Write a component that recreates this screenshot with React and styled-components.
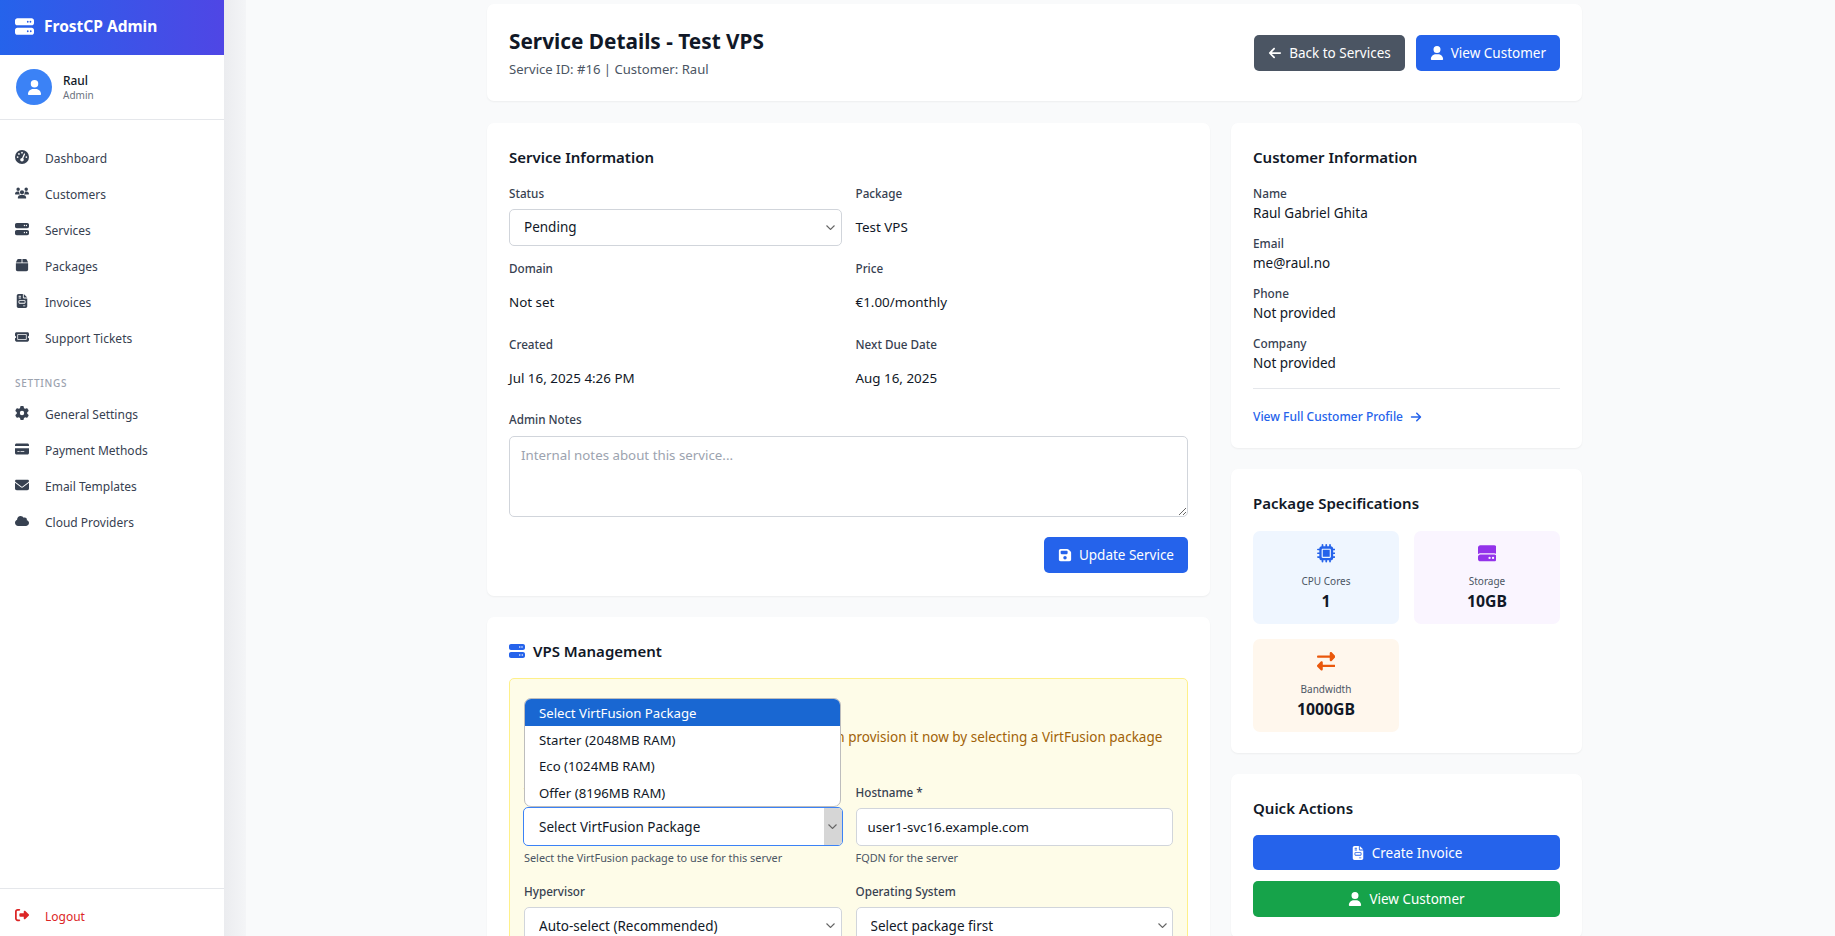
import React from "react";
import styled, { createGlobalStyle } from "styled-components";
import {
  FaArrowLeft,
  FaArrowRight,
  FaBox,
  FaCloud,
  FaCreditCard,
  FaEnvelope,
  FaFileInvoice,
  FaFloppyDisk,
  FaGaugeHigh,
  FaGear,
  FaHardDrive,
  FaMicrochip,
  FaRightFromBracket,
  FaRightLeft,
  FaServer,
  FaTicket,
  FaUser,
  FaUsers,
  FaTriangleExclamation,
} from "react-icons/fa6";

const chevron = `url("data:image/svg+xml,%3Csvg xmlns='http://www.w3.org/2000/svg' width='9' height='5' viewBox='0 0 9 5' fill='none' stroke='%23666' stroke-width='1.1'%3E%3Cpath d='M.5.5l4 4 4-4'/%3E%3C/svg%3E")`;

const GlobalStyle = createGlobalStyle`
  html, body {
    margin: 0;
    height: 100%;
    overflow: hidden;
    background: #f9fafb;
    font-family: "Noto Sans", "Open Sans", sans-serif;
    font-size: 13.4px;
    color: #111827;
  }
  * { box-sizing: border-box; }
`;

const Page = styled.div`
  display: flex;
  height: 936px;
  overflow: hidden;
`;

// Sidebar
const Sidebar = styled.aside`
  width: 224px;
  flex: none;
  display: flex;
  flex-direction: column;
  background: #fff;
  position: relative;
  &::after {
    content: "";
    position: absolute;
    top: 0;
    bottom: 0;
    left: 100%;
    width: 22px;
    background: linear-gradient(to right, #ebecef, #f4f5f7);
  }
`;

const Brand = styled.div`
  height: 55px;
  display: flex;
  align-items: center;
  padding: 0 0 3px 15px;
  gap: 10px;
  color: #fff;
  font-size: 15.5px;
  font-weight: 700;
  background: linear-gradient(to right, #2563eb, #4f46e5);
  svg { font-size: 19px; }
`;

const UserBox = styled.div`
  height: 65px;
  display: flex;
  align-items: center;
  gap: 11px;
  padding-left: 16px;
  border-bottom: 1px solid #e5e7eb;
`;

const Avatar = styled.div`
  width: 36px;
  height: 36px;
  border-radius: 50%;
  background: #3b82f6;
  color: #fff;
  display: flex;
  align-items: center;
  justify-content: center;
  font-size: 15px;
`;

const UserText = styled.div`
  padding-top: 1px;
`;

const UserName = styled.div`
  font-size: 11.9px;
  font-weight: 500;
  line-height: 16px;
`;

const UserRole = styled.div`
  font-size: 10px;
  color: #6b7280;
  line-height: 15px;
`;

const Nav = styled.nav`
  padding-top: 20px;
  flex: 1;
`;

const NavItem = styled.a`
  height: 36px;
  display: flex;
  align-items: center;
  padding-left: 15px;
  font-size: 12px;
  color: ${(p) => (p.$danger ? "#dc2626" : "#374151")};
`;

const NavIcon = styled.span`
  width: 30px;
  flex: none;
  display: flex;
  font-size: 14px;
  color: ${(p) => (p.$danger ? "#dc2626" : "#374151")};
  position: relative;
  top: -1px;
`;

const NavHeading = styled.div`
  margin: 18px 0 4px;
  padding-left: 15px;
  height: 18px;
  line-height: 18px;
  font-size: 10px;
  font-weight: 500;
  letter-spacing: 0.7px;
  color: #9ca3af;
`;

const SidebarFoot = styled.div`
  height: 48px;
  padding-top: 7px;
  border-top: 1px solid #e5e7eb;
  display: flex;
  align-items: center;
`;

// Main column
const Main = styled.main`
  flex: 1;
  min-width: 0;
  padding: 4px 253px 0 263px;
  height: 936px;
  overflow: hidden;
`;

const Card = styled.section`
  background: #fff;
  border-radius: 7px;
  padding: 21px 22px;
  box-shadow: 0 1px 2px rgba(0, 0, 0, 0.05);
`;

const HeaderCard = styled(Card)`
  height: 97px;
  display: flex;
  align-items: center;
  justify-content: space-between;
  margin-bottom: 22px;
`;

const Title = styled.h1`
  margin: 0;
  font-size: 20.8px;
  font-weight: 700;
  line-height: 28px;
`;

const Subtitle = styled.p`
  margin: 5px 0 0;
  font-size: 13.1px;
  line-height: 18px;
  color: #4b5563;
`;

const HeaderActions = styled.div`
  display: flex;
  gap: 11px;
`;

const Button = styled.button`
  height: ${(p) => (p.$short ? 35 : 36)}px;
  padding: 0 14px;
  border: none;
  border-radius: 5px;
  display: inline-flex;
  align-items: center;
  justify-content: center;
  gap: 7px;
  font-family: inherit;
  font-size: 13.5px;
  color: #fff;
  background: ${(p) => p.$bg || "#2563eb"};
  width: ${(p) => (p.$block ? "100%" : "auto")};
  svg { font-size: 14px; }
`;

const Columns = styled.div`
  display: grid;
  grid-template-columns: 723px 351px;
  gap: 21px;
  align-items: start;
`;

const Stack = styled.div`
  display: flex;
  flex-direction: column;
  gap: 21px;
`;

const CardTitle = styled.h2`
  margin: 0 0 14.5px;
  display: flex;
  align-items: center;
  gap: 8px;
  font-size: 15px;
  font-weight: 600;
  line-height: 26px;
  svg { color: #2563eb; font-size: 16px; }
`;

const FieldGrid = styled.div`
  display: grid;
  grid-template-columns: 1fr 1fr;
  column-gap: 14px;
`;

const Field = styled.div`
  height: ${(p) => p.$h || 75.5}px;
`;

const Label = styled.div`
  font-size: 11.7px;
  line-height: 17px;
  color: #374151;
  font-weight: 500;
  margin-bottom: ${(p) => p.$mb ?? 7}px;
`;

const StaticValue = styled.div`
  font-size: 13.4px;
  line-height: 37px;
  color: #111827;
`;

const Select = styled.select`
  appearance: none;
  width: 100%;
  height: 37px;
  padding: 0 14px;
  border: 1px solid #d1d5db;
  border-radius: 5px;
  background: #fff ${chevron} no-repeat right 5.5px center;
  font-family: inherit;
  font-size: 13.5px;
  color: #111827;
`;

const Input = styled.input`
  width: 100%;
  height: 38px;
  padding: 0 11px;
  border: 1px solid #d1d5db;
  border-radius: 5px;
  font-family: inherit;
  font-size: 13.3px;
  color: #111827;
`;

const NotesArea = styled.textarea`
  display: block;
  width: 100%;
  height: 81px;
  padding: 9px 11px;
  border: 1px solid #d1d5db;
  border-radius: 5px;
  font-family: inherit;
  font-size: 13.3px;
  &::placeholder { color: #9ca3af; }
`;

const FormFoot = styled.div`
  display: flex;
  justify-content: flex-end;
  margin: 20px 0 1.5px;
`;

const ManageBox = styled.div`
  background: #fefce8;
  border: 1px solid #fef08a;
  border-radius: 5px;
  padding: 14px;
  min-height: 300px;
`;

const Notice = styled.div`
  height: 91px;
  padding-top: 4px;
  color: #a16207;
  font-size: 13.5px;
`;

const NoticeHead = styled.div`
  display: flex;
  align-items: center;
  gap: 7px;
  height: 24px;
  font-weight: 500;
`;

const NoticeBody = styled.p`
  margin: 7px 0 0;
  padding-left: 4px;
  line-height: 18px;
`;

const Hint = styled.div`
  margin-top: 4px;
  font-size: 10.9px;
  line-height: 15px;
  color: #4b5563;
`;

const PickerWrap = styled.div`
  position: relative;
  margin: -1px -1px 0;
`;

const OpenSelect = styled.div`
  height: 39px;
  border: 1.5px solid #3b82f6;
  border-radius: 5px;
  background: #fff;
  display: flex;
  align-items: stretch;
  overflow: hidden;
`;

const OpenSelectText = styled.span`
  flex: 1;
  display: flex;
  align-items: center;
  padding-left: 15px;
  font-size: 13.5px;
`;

const OpenSelectArrow = styled.span`
  width: 18px;
  background: #d6d6d6;
  display: flex;
  align-items: center;
  justify-content: center;
  color: #666;
`;

const OptionList = styled.ul`
  position: absolute;
  left: 1px;
  right: 2px;
  bottom: 100%;
  margin: 0;
  padding: 0;
  list-style: none;
  background: #fff;
  border: 1px solid #bdbdbd;
  border-radius: 7px;
  overflow: hidden;
`;

const Option = styled.li`
  height: 26.75px;
  display: flex;
  align-items: center;
  padding: 1px 0 0 14px;
  font-size: 13.2px;
  color: ${(p) => (p.$active ? "#fff" : "#111827")};
  background: ${(p) => (p.$active ? "#1967d2" : "transparent")};
`;

// Right column
const InfoItem = styled.div`
  margin-bottom: 11px;
`;

const InfoLabel = styled.div`
  font-size: 11.8px;
  line-height: 17px;
  margin-bottom: 1px;
  color: #374151;
  font-weight: 500;
`;

const InfoValue = styled.div`
  font-size: 13.5px;
  line-height: 21px;
`;

const Divider = styled.hr`
  border: none;
  border-top: 1px solid #e5e7eb;
  margin: 14.5px 0 17px;
`;

const TextLink = styled.a`
  display: flex;
  align-items: center;
  height: 21px;
  gap: 7px;
  font-size: 12px;
  font-weight: 500;
  color: #2563eb;
`;

const SpecGrid = styled.div`
  display: grid;
  grid-template-columns: 1fr 1fr;
  gap: 15px;
`;

const SpecTile = styled.div`
  height: 93px;
  border-radius: 7px;
  background: ${(p) => p.$bg};
  display: flex;
  flex-direction: column;
  align-items: center;
  padding-top: 12px;
`;

const SpecIcon = styled.div`
  color: ${(p) => p.$color};
  font-size: 18.5px;
  line-height: 0;
  height: 22px;
  display: flex;
  align-items: center;
`;

const SpecLabel = styled.div`
  margin-top: 8px;
  font-size: 10px;
  line-height: 16px;
  color: #4b5563;
`;

const SpecValue = styled.div`
  margin-top: 2.5px;
  font-size: 15.8px;
  font-weight: 700;
  line-height: 20px;
`;

const ActionList = styled.div`
  display: flex;
  flex-direction: column;
  gap: 11px;
`;

const navTop = [
  [FaGaugeHigh, "Dashboard"],
  [FaUsers, "Customers"],
  [FaServer, "Services"],
  [FaBox, "Packages"],
  [FaFileInvoice, "Invoices"],
  [FaTicket, "Support Tickets"],
];

const navSettings = [
  [FaGear, "General Settings"],
  [FaCreditCard, "Payment Methods"],
  [FaEnvelope, "Email Templates"],
  [FaCloud, "Cloud Providers"],
];

const customer = [
  ["Name", "Raul Gabriel Ghita"],
  ["Email", "me@raul.no"],
  ["Phone", "Not provided"],
  ["Company", "Not provided"],
];

const specs = [
  { icon: FaMicrochip, label: "CPU Cores", value: "1", bg: "#eff6ff", color: "#2563eb" },
  { icon: FaHardDrive, label: "Storage", value: "10GB", bg: "#faf5ff", color: "#9333ea" },
  { icon: FaRightLeft, label: "Bandwidth", value: "1000GB", bg: "#fff7ed", color: "#ea580c" },
];

const renderNav = ([Icon, label]) => (
  <NavItem key={label}>
    <NavIcon>
      <Icon />
    </NavIcon>
    {label}
  </NavItem>
);

const App = () => (
  <>
    <GlobalStyle />
    <Page>
      <Sidebar>
        <Brand>
          <FaServer />
          FrostCP Admin
        </Brand>
        <UserBox>
          <Avatar>
            <FaUser />
          </Avatar>
          <UserText>
            <UserName>Raul</UserName>
            <UserRole>Admin</UserRole>
          </UserText>
        </UserBox>
        <Nav>
          {navTop.map(renderNav)}
          <NavHeading>SETTINGS</NavHeading>
          {navSettings.map(renderNav)}
        </Nav>
        <SidebarFoot>
          <NavItem $danger>
            <NavIcon $danger>
              <FaRightFromBracket />
            </NavIcon>
            Logout
          </NavItem>
        </SidebarFoot>
      </Sidebar>

      <Main>
        <HeaderCard>
          <div>
            <Title>Service Details - Test VPS</Title>
            <Subtitle>Service ID: #16 | Customer: Raul</Subtitle>
          </div>
          <HeaderActions>
            <Button $bg="#4b5563">
              <FaArrowLeft /> Back to Services
            </Button>
            <Button>
              <FaUser /> View Customer
            </Button>
          </HeaderActions>
        </HeaderCard>

        <Columns>
          <Stack>
            <Card>
              <CardTitle>Service Information</CardTitle>
              <FieldGrid>
                <Field>
                  <Label>Status</Label>
                  <Select defaultValue="Pending">
                    <option>Pending</option>
                  </Select>
                </Field>
                <Field>
                  <Label>Package</Label>
                  <StaticValue>Test VPS</StaticValue>
                </Field>
                <Field>
                  <Label>Domain</Label>
                  <StaticValue>Not set</StaticValue>
                </Field>
                <Field>
                  <Label>Price</Label>
                  <StaticValue>€1.00/monthly</StaticValue>
                </Field>
                <Field>
                  <Label>Created</Label>
                  <StaticValue>Jul 16, 2025 4:26 PM</StaticValue>
                </Field>
                <Field>
                  <Label>Next Due Date</Label>
                  <StaticValue>Aug 16, 2025</StaticValue>
                </Field>
              </FieldGrid>
              <Label $mb={8}>Admin Notes</Label>
              <NotesArea placeholder="Internal notes about this service..." />
              <FormFoot>
                <Button>
                  <FaFloppyDisk /> Update Service
                </Button>
              </FormFoot>
            </Card>

            <Card>
              <CardTitle>
                <FaServer />
                VPS Management
              </CardTitle>
              <ManageBox>
                <Notice>
                  <NoticeHead>
                    <FaTriangleExclamation />
                    Server Not Provisioned
                  </NoticeHead>
                  <NoticeBody>
                    This service has not been provisioned yet. You can provision it now by selecting a VirtFusion package
                  </NoticeBody>
                </Notice>
                <FieldGrid>
                  <Field $h={99}>
                    <Label>VirtFusion Package *</Label>
                    <PickerWrap>
                      <OptionList>
                        <Option $active>Select VirtFusion Package</Option>
                        <Option>Starter (2048MB RAM)</Option>
                        <Option>Eco (1024MB RAM)</Option>
                        <Option>Offer (8196MB RAM)</Option>
                      </OptionList>
                      <OpenSelect>
                        <OpenSelectText>Select VirtFusion Package</OpenSelectText>
                        <OpenSelectArrow>
                          <svg width="9" height="5" viewBox="0 0 9 5" fill="none" stroke="currentColor" strokeWidth="1.1">
                            <path d="M.5.5l4 4 4-4" />
                          </svg>
                        </OpenSelectArrow>
                      </OpenSelect>
                    </PickerWrap>
                    <Hint>Select the VirtFusion package to use for this server</Hint>
                  </Field>
                  <Field $h={99}>
                    <Label>Hostname *</Label>
                    <Input defaultValue="user1-svc16.example.com" />
                    <Hint>FQDN for the server</Hint>
                  </Field>
                  <Field>
                    <Label>Hypervisor</Label>
                    <Select defaultValue="Auto-select (Recommended)">
                      <option>Auto-select (Recommended)</option>
                    </Select>
                  </Field>
                  <Field>
                    <Label>Operating System</Label>
                    <Select defaultValue="Select package first">
                      <option>Select package first</option>
                    </Select>
                  </Field>
                </FieldGrid>
              </ManageBox>
            </Card>
          </Stack>

          <Stack>
            <Card>
              <CardTitle>Customer Information</CardTitle>
              {customer.map(([label, value]) => (
                <InfoItem key={label}>
                  <InfoLabel>{label}</InfoLabel>
                  <InfoValue>{value}</InfoValue>
                </InfoItem>
              ))}
              <Divider />
              <TextLink>
                View Full Customer Profile <FaArrowRight />
              </TextLink>
            </Card>

            <Card>
              <CardTitle>Package Specifications</CardTitle>
              <SpecGrid>
                {specs.map(({ icon: Icon, label, value, bg, color }) => (
                  <SpecTile key={label} $bg={bg}>
                    <SpecIcon $color={color}>
                      <Icon />
                    </SpecIcon>
                    <SpecLabel>{label}</SpecLabel>
                    <SpecValue>{value}</SpecValue>
                  </SpecTile>
                ))}
              </SpecGrid>
            </Card>

            <Card>
              <CardTitle>Quick Actions</CardTitle>
              <ActionList>
                <Button $block $short>
                  <FaFileInvoice /> Create Invoice
                </Button>
                <Button $block $bg="#16a34a">
                  <FaUser /> View Customer
                </Button>
              </ActionList>
            </Card>
          </Stack>
        </Columns>
      </Main>
    </Page>
  </>
);

export default App;
